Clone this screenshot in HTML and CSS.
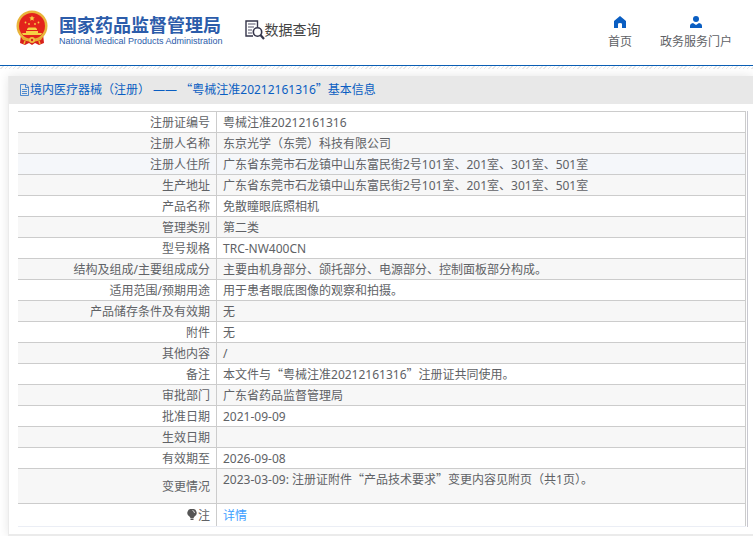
FILE: index.html
```html
<!DOCTYPE html>
<html lang="zh-CN">
<head>
  <meta charset="UTF-8">
  <meta name="viewport" content="width=device-width, initial-scale=1.0">
  <title>国家药品监督管理局 数据查询</title>
  <link rel="stylesheet" href="styles.css">
</head>
<body>
  <header class="header">
    <a class="logo" href="#">
      <svg class="emblem" viewBox="0 0 32 36" aria-hidden="true">
        <path d="M5 24 L4 33 L9 35 L13 33 L16 35 L19 33 L23 35 L28 33 L27 24 Z" fill="#d8201c"/>
        <circle cx="16" cy="16" r="15.5" fill="#e9b43a"/>
        <circle cx="16" cy="16" r="13" fill="#e3231b"/>
        <path d="M16 5.500 l.8 1.800 2 .2 -1.500 1.300 .5 2 -1.800 -1.100 -1.800 1.100 .5 -2 -1.500 -1.300 2 -.2z" fill="#f6cf45"/>
        <g fill="#f6cf45">
          <circle cx="9.5" cy="12.5" r=".9"/>
          <circle cx="13" cy="14" r=".9"/>
          <circle cx="19" cy="14" r=".9"/>
          <circle cx="22.5" cy="12.5" r=".9"/>
          <path d="M11 19 L12.500 17.500 H19.500 L21 19 V20 H11 Z"/>
          <path d="M10 21 H22 V23 H26 L25 25 H7 L6 23 H10 Z"/>
        </g>
        <path d="M5 27 Q16 31 27 27 L25 30 Q16 33 7 30 Z" fill="#e9a932"/>
        <circle cx="16" cy="30" r="3" fill="#f0c040"/>
        <circle cx="16" cy="30" r="1.200" fill="#d8201c"/>
        <path d="M9 31 L8 34 M23 31 L24 34" stroke="#f0b535" stroke-width="1.500"/>
      </svg>
      <span class="logo-text">
        <span class="logo-cn">国家药品监督管理局</span>
        <span class="logo-en">National Medical Products Administration</span>
      </span>
    </a>
    <a class="search-title" href="#">
      <svg class="search-icon" viewBox="0 0 20 20" aria-hidden="true">
        <path d="M12.500 7 V1 H1 V16 H8" fill="none" stroke="#35354a" stroke-width="1.400"/>
        <path d="M3 4 H10.500 M3 7 H9 M3 10 H7 M3 13 H7" stroke="#55556a" stroke-width="1.200"/>
        <circle cx="12.500" cy="12" r="4.200" fill="#fff" stroke="#35354a" stroke-width="1.600"/>
        <path d="M15.500 15 L19 19" stroke="#35354a" stroke-width="2.200"/>
      </svg>
      <span>数据查询</span>
    </a>
    <nav class="nav">
      <a href="#">
        <svg viewBox="0 0 12 12" aria-hidden="true"><path d="M6 0 L12 5 V12 H8 V8 Q8 7 6 7 Q4 7 4 8 V12 H0 V5 Z" fill="#0a5ec2"/></svg>
        首页
      </a>
      <a href="#">
        <svg viewBox="0 0 12 12" aria-hidden="true"><circle cx="6" cy="3" r="3" fill="#0a5ec2"/><path d="M0 12 V10 Q0 7.500 3 7 L6 9 L9 7 Q12 7.500 12 10 V12 Z" fill="#0a5ec2"/></svg>
        政务服务门户
      </a>
    </nav>
  </header>

  <main class="content">
    <section class="card">
      <h1 class="card-title">
        <svg class="doc-icon" viewBox="0 0 11 12" aria-hidden="true"><path d="M1.500 .5 H7 L9.500 3 V11.500 H1.500 Z M6.500 .5 V3.500 H9.500 M3 5.500 H8 M3 7.500 H8 M3 9.500 H8" fill="none" stroke="#2a72c8" stroke-width=".8"/></svg>
        <span>境内医疗器械（注册） —— <span class="quote">“</span>粤械注准20212161316<span class="quote">”</span>基本信息</span>
      </h1>
      <div class="table-box">
        <table class="info">
          <tbody>
            <tr><th scope="row">注册证编号</th><td>粤械注准20212161316</td></tr>
            <tr><th scope="row">注册人名称</th><td>东京光学（东莞）科技有限公司</td></tr>
            <tr class="active"><th scope="row">注册人住所</th><td>广东省东莞市石龙镇中山东富民街2号101室、201室、301室、501室</td></tr>
            <tr><th scope="row">生产地址</th><td>广东省东莞市石龙镇中山东富民街2号101室、201室、301室、501室</td></tr>
            <tr><th scope="row">产品名称</th><td>免散瞳眼底照相机</td></tr>
            <tr><th scope="row">管理类别</th><td>第二类</td></tr>
            <tr><th scope="row">型号规格</th><td>TRC-NW400CN</td></tr>
            <tr><th scope="row">结构及组成/主要组成成分</th><td>主要由机身部分、颌托部分、电源部分、控制面板部分构成。</td></tr>
            <tr><th scope="row">适用范围/预期用途</th><td>用于患者眼底图像的观察和拍摄。</td></tr>
            <tr><th scope="row">产品储存条件及有效期</th><td>无</td></tr>
            <tr><th scope="row">附件</th><td>无</td></tr>
            <tr><th scope="row">其他内容</th><td>/</td></tr>
            <tr><th scope="row">备注</th><td>本文件与<span class="quote">“</span>粤械注准20212161316<span class="quote">”</span>注册证共同使用。</td></tr>
            <tr><th scope="row">审批部门</th><td>广东省药品监督管理局</td></tr>
            <tr><th scope="row">批准日期</th><td>2021-09-09</td></tr>
            <tr><th scope="row">生效日期</th><td></td></tr>
            <tr><th scope="row">有效期至</th><td>2026-09-08</td></tr>
            <tr class="changes"><th scope="row">变更情况</th><td>2023-03-09: 注册证附件<span class="quote">“</span>产品技术要求<span class="quote">”</span>变更内容见附页（共1页）。</td></tr>
            <tr class="note">
              <th scope="row"><svg class="bulb" viewBox="0 0 10 12" aria-hidden="true"><path d="M5 0 A4 4 0 0 1 7.500 7.500 L6.500 9 H3.500 L2.500 7.500 A4 4 0 0 1 5 0 Z M3.500 9.500 H6.500 V11 H3.500 Z" fill="#555"/><path d="M5.500 1.500 Q7.500 2 7.500 4" fill="none" stroke="#ddd"/></svg>注</th>
              <td><a href="#">详情</a></td>
            </tr>
          </tbody>
        </table>
      </div>
    </section>
  </main>
</body>
</html>
```
FILE: styles.css
```css
* {
  box-sizing: border-box;
}
body {
  margin: 0;
  background: #fff;
  color: #606266;
  font-family: "Noto Sans", "Noto Sans CJK SC", sans-serif;
  font-size: 12px;
  line-height: 18px;
  overflow-x: hidden;
}
a {
  color: inherit;
  text-decoration: none;
}
.quote {
  font-family: "Noto Sans CJK SC", sans-serif;
  line-height: 1;
}

/* header */
.header {
  display: flex;
  align-items: flex-start;
  height: 66px;
  padding: 0 21px 0 16px;
  border-bottom: 1px solid #0a5eb4;
}
.logo {
  display: flex;
  gap: 11px;
  padding-top: 10px;
  color: #2c5caa;
}
.emblem {
  width: 32px;
  height: 36px;
}
.logo-text {
  display: flex;
  flex-direction: column;
  padding-top: 3px;
  white-space: nowrap;
}
.logo-cn {
  font-family: "Noto Sans CJK SC", sans-serif;
  font-size: 18px;
  font-weight: bold;
  line-height: 22px;
}
.logo-en {
  font-family: "Liberation Sans", Arial, sans-serif;
  font-size: 9px;
  line-height: 12px;
}
.search-title {
  display: flex;
  align-items: center;
  margin: 20px 0 0 22px;
  color: #444;
  font-size: 14px;
}
.search-icon {
  width: 20px;
  height: 20px;
}
.nav {
  display: flex;
  gap: 28px;
  margin-left: auto;
  padding-top: 16px;
}
.nav a {
  display: flex;
  flex-direction: column;
  align-items: center;
  gap: 5px;
}
.nav svg {
  width: 12px;
  height: 12px;
}

/* detail card */
.content {
  padding: 10px 0 0 8px;
  background: repeating-linear-gradient(135deg, #fff 0 2px, #e8e8e8 2px 3px) top / 100% 3px no-repeat;
}
.card {
  padding-bottom: 7px;
  background: #fff;
  border: 1px solid #ebebeb;
  border-width: 0 0 2px 1px;
  box-shadow: 0 0 10px rgba(0, 0, 0, 0.1);
}
.card-title {
  display: flex;
  align-items: center;
  height: 28px;
  margin: 0;
  padding-left: 10px;
  background: #e8e8e8;
  color: #0a5ec2;
  font-size: 12px;
  font-weight: normal;
}
.doc-icon {
  width: 11px;
  height: 12px;
}
.table-box {
  margin: 7px 5px 0 9px;
  padding-right: 1px;
  border-right: 1px solid #c8c8d0;
}
.info {
  width: 100%;
  border-spacing: 0;
  border-bottom: 1px solid #ebeef5;
}
.info th,
.info td {
  height: 21px;
  padding: 2px 6px 0;
  border-top: 1px solid #ccc;
  border-right: 1px solid #ccc;
  font-weight: normal;
  text-align: left;
}
.info th {
  width: 199px;
  text-align: right;
}
.info tr:nth-child(even) {
  background: #f7f7f7;
}
.info .active {
  background: #f5f7fa;
}
.info .changes th,
.info .changes td {
  height: 35px;
}
.info .changes td {
  vertical-align: top;
}
.info .note th,
.info .note td {
  height: 23px;
}
.info .note a {
  color: #409eff;
}
.bulb {
  width: 10px;
  height: 12px;
  margin-right: 1px;
  vertical-align: -1px;
}
```
